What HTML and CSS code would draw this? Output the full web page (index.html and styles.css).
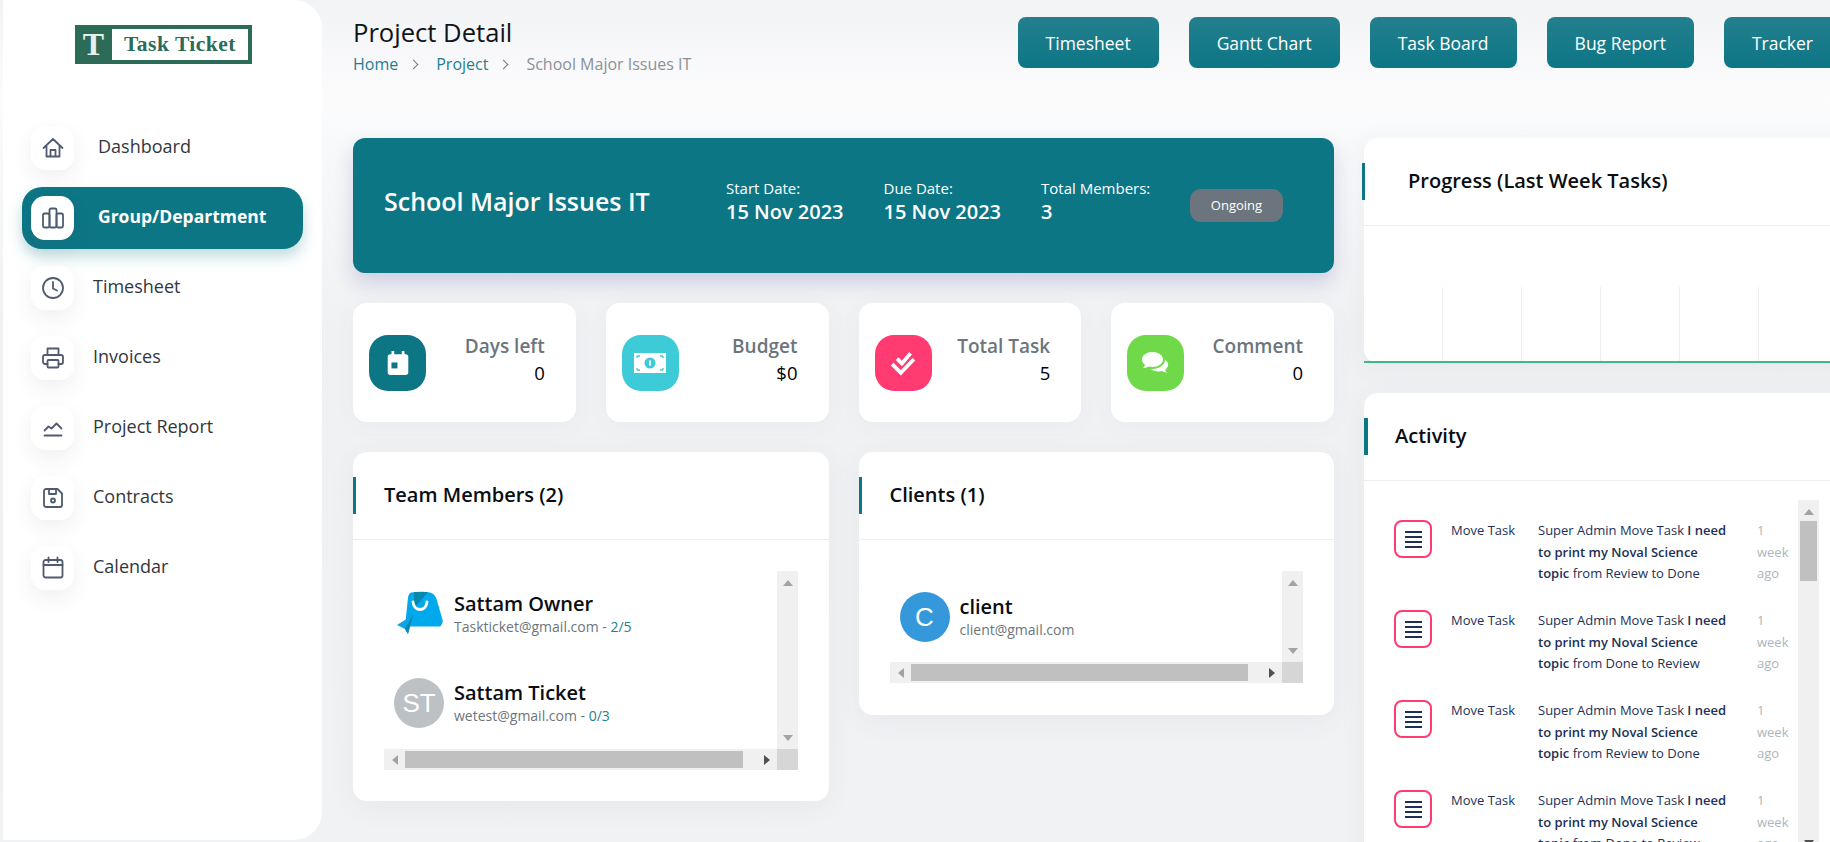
FILE: index.html
```html
<!DOCTYPE html>
<html lang="en">
<head>
    <meta charset="UTF-8">
    <meta name="viewport" content="width=device-width, initial-scale=1.0">
    <title>Project Detail</title>
    <link rel="stylesheet" href="styles.css">
</head>
<body>

<aside class="sidebar">
    <div class="logo">
        <span class="logo-t">T</span>
        <span class="logo-name">Task Ticket</span>
    </div>
    <nav class="menu">
        <a class="menu-row menu-row-wide">
            <span class="menu-icon"><svg viewBox="0 0 24 24"><path d="M2.500 12 12 3l9.500 9M5.500 10v10.500h13V10M9.500 20.500V14h5v6.500"/></svg></span>
            <span class="menu-label">Dashboard</span>
        </a>
        <a class="menu-row menu-row-wide active">
            <span class="menu-icon"><svg viewBox="0 0 24 24"><rect x="2" y="7.500" width="6.500" height="14" rx="1.500"/><rect x="8.500" y="2.500" width="7" height="19" rx="1.500"/><rect x="15.500" y="7.500" width="6.500" height="14" rx="1.500"/></svg></span>
            <span class="menu-label">Group/Department</span>
        </a>
        <a class="menu-row">
            <span class="menu-icon"><svg viewBox="0 0 24 24"><circle cx="12" cy="12" r="10"/><path d="M12 6v6.500l4 2"/></svg></span>
            <span class="menu-label">Timesheet</span>
        </a>
        <a class="menu-row">
            <span class="menu-icon"><svg viewBox="0 0 24 24"><path d="M6.500 9V2.500h11V9M6.500 18H4a2 2 0 0 1-2-2v-5a2 2 0 0 1 2-2h16a2 2 0 0 1 2 2v5a2 2 0 0 1-2 2h-2.500"/><rect x="6.500" y="14" width="11" height="7.500" rx="1"/></svg></span>
            <span class="menu-label">Invoices</span>
        </a>
        <a class="menu-row">
            <span class="menu-icon"><svg viewBox="0 0 24 24"><path d="M3.500 19.500h17M3.500 14.500l4-4 3 2 5-5 5 5"/></svg></span>
            <span class="menu-label">Project Report</span>
        </a>
        <a class="menu-row">
            <span class="menu-icon"><svg viewBox="0 0 24 24"><path d="M5 3h11.500L21 7.500V19a2 2 0 0 1-2 2H5a2 2 0 0 1-2-2V5a2 2 0 0 1 2-2zM8 3v5h7V3"/><circle cx="12" cy="14.500" r="2"/></svg></span>
            <span class="menu-label">Contracts</span>
        </a>
        <a class="menu-row">
            <span class="menu-icon"><svg viewBox="0 0 24 24"><rect x="2.500" y="4" width="19" height="17.500" rx="2"/><path d="M2.500 9h19M7.500 1.500v4.500M16.500 1.500v4.500"/></svg></span>
            <span class="menu-label">Calendar</span>
        </a>
    </nav>
</aside>

<div class="main">
    <header class="topbar">
        <div>
            <h1>Project Detail</h1>
            <div class="crumbs">
                <a>Home</a><span class="sep"></span><a>Project</a><span class="sep"></span><span>School Major Issues IT</span>
            </div>
        </div>
        <div class="top-buttons">
            <button>Timesheet</button>
            <button>Gantt Chart</button>
            <button>Task Board</button>
            <button>Bug Report</button>
            <button>Tracker</button>
        </div>
    </header>

    <div class="columns">
        <div class="left-col">
            <section class="hero">
                <h2>School Major Issues IT</h2>
                <div class="hero-item hero-start"><span>Start Date:</span><strong>15 Nov 2023</strong></div>
                <div class="hero-item hero-due"><span>Due Date:</span><strong>15 Nov 2023</strong></div>
                <div class="hero-item hero-members"><span>Total Members:</span><strong>3</strong></div>
                <span class="status">Ongoing</span>
            </section>

            <div class="stats">
                <div class="stat">
                    <span class="stat-icon teal"><svg viewBox="0 0 24 24"><path fill="#fff" d="M6 1h2.500v3H15.500V1H18v3h1a2.500 2.500 0 0 1 2.500 2.500v14A2.500 2.500 0 0 1 19 23H5a2.500 2.500 0 0 1-2.500-2.500v-14A2.500 2.500 0 0 1 5 4h1z"/><rect x="6" y="11.500" width="5.500" height="5.500" fill="#0d7685"/></svg></span>
                    <div class="stat-text"><span>Days left</span><b>0</b></div>
                </div>
                <div class="stat">
                    <span class="stat-icon cyan"><svg viewBox="0 0 32 24"><rect y="2" width="32" height="20" fill="#fff"/><circle cx="16" cy="12" r="5.500" fill="#3ecbd8"/><path d="M15 9.500h2v5h-2z" fill="#fff"/><path d="M3 5h3M3 5v2M29 5h-3M29 5v2M3 19h3M3 19v-2M29 19h-3M29 19v-2" stroke="#3ecbd8" stroke-width="1.300" fill="none"/></svg></span>
                    <div class="stat-text"><span>Budget</span><b>$0</b></div>
                </div>
                <div class="stat">
                    <span class="stat-icon pink"><svg viewBox="0 0 24 24"><path d="M2 13l8 8L22 8.500M6.500 8l4.500 4.500L19 3" stroke="#fff" stroke-width="3.400" fill="none"/></svg></span>
                    <div class="stat-text"><span>Total Task</span><b>5</b></div>
                </div>
                <div class="stat">
                    <span class="stat-icon green"><svg viewBox="0 0 30 24"><path fill="#fff" d="M11.500 1C5.700 1 1 4.300 1 8.500c0 2.100 1.200 4 3.100 5.400C3.800 15.200 3 16.300 1.500 17c2.600.2 4.800-.6 6.200-1.500 1.200.3 2.500.5 3.800.5 5.800 0 10.500-3.300 10.500-7.500S17.300 1 11.500 1z"/><path fill="#fff" stroke="#70d94a" stroke-width="1" d="M23.500 8.500c.3 4.800-5 9-12.500 9-.7 0-1.300 0-2-.1 1.800 2.200 5 3.600 8.500 3.600 1.300 0 2.500-.2 3.700-.5 1.400.9 3.400 1.700 6 1.500-1.500-.7-2.300-1.800-2.600-3.100 1.800-1.400 2.900-3.200 2.900-5.200 0-2.600-2-4.900-4-5.200z"/></svg></span>
                    <div class="stat-text"><span>Comment</span><b>0</b></div>
                </div>
            </div>

            <div class="panels">
                <section class="panel">
                    <h3 class="panel-title">Team Members (2)</h3>
                    <div class="scroll-box team-box">
                        <div class="scroll-body">
                            <div class="person">
                                <svg class="avatar" viewBox="0 0 50 50">
                                    <path fill="#00a8ec" d="M17 3.500c6-1 14-1 19 0 4 1 6 4 7 8l6 21c.5 3-1 5-4 5H11l3-29c.3-2 1.500-4.500 3-5z"/>
                                    <path fill="#0488ad" d="M20 3h14L20 19z"/>
                                    <path fill="none" stroke="#fff" stroke-width="2.800" stroke-linecap="round" d="M19 13c1 10 13 10 14 0"/>
                                    <path fill="#0fa3e3" d="M19 26 3 36l8 4 3 5z"/>
                                    <path fill="#0687b4" d="M19 26 11 40l3 5z"/>
                                </svg>
                                <div class="person-text"><div class="person-name">Sattam Owner</div><div class="person-mail">Taskticket@gmail.com - <em>2/5</em></div></div>
                            </div>
                            <div class="person">
                                <span class="avatar avatar-grey">ST</span>
                                <div class="person-text"><div class="person-name">Sattam Ticket</div><div class="person-mail">wetest@gmail.com - <em>0/3</em></div></div>
                            </div>
                        </div>
                        <div class="vbar"><i class="arr up"></i><i class="arr down"></i></div>
                        <div class="hbar"><i class="arr left"></i><span class="hthumb"></span><i class="arr right"></i></div>
                        <div class="corner"></div>
                    </div>
                </section>
                <section class="panel">
                    <h3 class="panel-title">Clients (1)</h3>
                    <div class="scroll-box client-box">
                        <div class="scroll-body">
                            <div class="person">
                                <span class="avatar avatar-blue">C</span>
                                <div class="person-text"><div class="person-name">client</div><div class="person-mail">client@gmail.com</div></div>
                            </div>
                        </div>
                        <div class="vbar"><i class="arr up"></i><i class="arr down"></i></div>
                        <div class="hbar"><i class="arr left"></i><span class="hthumb"></span><i class="arr right"></i></div>
                        <div class="corner"></div>
                    </div>
                </section>
            </div>
        </div>

        <div class="right-col">
            <section class="panel progress">
                <h3 class="panel-title">Progress (Last Week Tasks)</h3>
                <div class="chart">
                    <i></i><i></i><i></i><i></i><i></i><i></i><i></i><i></i><i></i>
                </div>
            </section>
            <section class="panel activity">
                <h3 class="panel-title">Activity</h3>
                <div class="activity-box">
                    <div class="activity-list">
                        <div class="act">
                            <span class="act-icon"><i></i></span>
                            <span class="act-type">Move Task</span>
                            <p class="act-text">Super Admin Move Task <b>I need to print my Noval Science topic</b> from Review to Done</p>
                            <span class="act-time">1 week ago</span>
                        </div>
                        <div class="act">
                            <span class="act-icon"><i></i></span>
                            <span class="act-type">Move Task</span>
                            <p class="act-text">Super Admin Move Task <b>I need to print my Noval Science topic</b> from Done to Review</p>
                            <span class="act-time">1 week ago</span>
                        </div>
                        <div class="act">
                            <span class="act-icon"><i></i></span>
                            <span class="act-type">Move Task</span>
                            <p class="act-text">Super Admin Move Task <b>I need to print my Noval Science topic</b> from Review to Done</p>
                            <span class="act-time">1 week ago</span>
                        </div>
                        <div class="act">
                            <span class="act-icon"><i></i></span>
                            <span class="act-type">Move Task</span>
                            <p class="act-text">Super Admin Move Task <b>I need to print my Noval Science topic</b> from Done to Review</p>
                            <span class="act-time">1 week ago</span>
                        </div>
                    </div>
                    <div class="act-bar"><i class="arr up"></i><span class="vthumb"></span><i class="arr down dark"></i></div>
                </div>
            </section>
        </div>
    </div>
</div>

</body>
</html>
```

FILE: styles.css
```css
* {
    box-sizing: border-box;
}
html, body {
    height: 842px;
    overflow: hidden;
}
body {
    margin: 0;
    display: flex;
    font-family: "Open Sans", sans-serif;
    color: #000;
    background: linear-gradient(180deg, #f2f3f5 0, #fcfcfd 100px, #f8f9fa 140px, #eff1f3 330px, #f1f2f4 100%);
}

/* sidebar */
.sidebar {
    flex: none;
    width: 319px;
    height: 840px;
    margin-left: 3px;
    background: #fff;
    border-radius: 0 28px 28px 0;
}
.logo {
    display: flex;
    align-items: stretch;
    width: 177px;
    height: 39px;
    margin: 25px 0 0 72px;
    padding: 4px 4px 4px 0;
    background: #2b6b58;
}
.logo-t {
    width: 37px;
    text-align: center;
    color: #e8f0ec;
    font: bold 32px/30px "Liberation Serif", serif;
}
.logo-name {
    flex: 1;
    background: #fff;
    color: #2b6b58;
    text-align: center;
    font: bold 21.500px/31px "Liberation Serif", serif;
    letter-spacing: 0.5px;
    white-space: nowrap;
}
.menu {
    display: flex;
    flex-direction: column;
    margin-top: 62px;
}
.menu-row {
    display: flex;
    align-items: center;
    gap: 19px;
    height: 44px;
    margin-bottom: 26px;
    padding-left: 28px;
    font-size: 18px;
    color: #33373d;
}
.menu-row-wide {
    gap: 24px;
}
.menu-label {
    margin-bottom: 5px;
}
.menu-row.active {
    width: 281px;
    height: 62px;
    margin: -9px 0 17px 19px;
    padding-left: 9px;
    background: #0d7685;
    color: #fff;
    font-size: 17.500px;
    font-weight: 700;
    border-radius: 20px;
    box-shadow: 0 8px 14px rgba(13, 118, 133, 0.25);
}
.menu-icon {
    display: flex;
    flex: none;
    align-items: center;
    justify-content: center;
    width: 43px;
    height: 44px;
    background: #fff;
    border-radius: 14px;
    box-shadow: 0 8px 20px rgba(60, 70, 90, 0.08);
}
.menu-icon svg {
    width: 24px;
    height: 24px;
    fill: none;
    stroke: #4f5b70;
    stroke-width: 1.800;
    stroke-linejoin: round;
    stroke-linecap: round;
}

/* header */
.main {
    flex: none;
    width: 1508px;
    padding-left: 31px;
}
.topbar {
    display: flex;
    justify-content: space-between;
    height: 138px;
}
h1 {
    margin: 16px 0 0;
    font-size: 25.600px;
    font-weight: 400;
    line-height: 34px;
    color: #10141a;
}
.crumbs {
    display: flex;
    align-items: center;
    margin-top: 3px;
    font-size: 16px;
    line-height: 22px;
    color: #8a9099;
}
.crumbs a {
    color: #1f7f90;
}
.sep {
    width: 7px;
    height: 7px;
    margin: 0 19px 0 12px;
    border-top: 1.500px solid #777;
    border-right: 1.500px solid #777;
    transform: rotate(45deg);
}
.top-buttons {
    display: flex;
    flex: none;
    gap: 30px;
    padding-top: 17px;
    margin-right: -11px;
}
.top-buttons button {
    height: 51px;
    padding: 0 28px;
    border: 0;
    border-radius: 8px;
    background: linear-gradient(180deg, #237f8e, #0d7685);
    color: #fff;
    font: 500 17.500px "Open Sans", sans-serif;
    white-space: nowrap;
}

/* layout */
.columns {
    display: flex;
    gap: 30px;
}
.left-col {
    flex: none;
    width: 981px;
}
.right-col {
    flex: none;
    width: 540px;
}

/* hero */
.hero {
    display: flex;
    align-items: center;
    height: 135px;
    padding-left: 31px;
    background: #0d7685;
    border-radius: 12px;
    color: #fff;
    box-shadow: 0 10px 20px rgba(70, 60, 150, 0.2);
}
.hero h2 {
    width: 342px;
    margin: 0 0 10px;
    font-size: 25px;
    font-weight: 600;
}
.hero-item {
    display: flex;
    flex-direction: column;
    margin-bottom: 8px;
}
.hero-item span {
    font-size: 15px;
    line-height: 20px;
}
.hero-item strong {
    font-size: 20px;
    font-weight: 600;
    line-height: 27px;
}
.hero-start, .hero-due {
    width: 157.500px;
}
.hero-members {
    width: 149px;
}
.status {
    width: 93px;
    height: 33px;
    background: #6c757d;
    border-radius: 11px;
    text-align: center;
    font-size: 13px;
    line-height: 33px;
    font-weight: 500;
}

/* stat cards */
.stats {
    display: grid;
    grid-template-columns: repeat(4, 1fr);
    gap: 30px;
    margin-top: 30px;
}
.stat {
    display: flex;
    align-items: center;
    justify-content: space-between;
    height: 119px;
    padding: 0 31px 0 16px;
    background: #fff;
    border-radius: 14px;
    box-shadow: 0 4px 24px rgba(100, 110, 130, 0.04);
}
.stat-icon {
    display: flex;
    align-items: center;
    justify-content: center;
    width: 57px;
    height: 56px;
    border-radius: 19px;
}
.stat-icon svg {
    width: 26px;
    height: 26px;
}
.cyan svg {
    width: 32px;
}
.green svg {
    width: 30px;
}
.teal {
    background: #0d7685;
}
.cyan {
    background: #3ecbd8;
}
.pink {
    background: #ff3b72;
}
.green {
    background: #70d94a;
}
.stat-text {
    display: flex;
    flex-direction: column;
    align-items: flex-end;
    margin-bottom: 7px;
}
.stat-text span {
    font-size: 19px;
    line-height: 26px;
    font-weight: 600;
    color: #6c757d;
}
.stat-text b {
    font-size: 18.500px;
    line-height: 27px;
    font-weight: 500;
}

/* panels */
.panels {
    display: grid;
    grid-template-columns: repeat(2, 1fr);
    gap: 30px;
    align-items: start;
    margin-top: 30px;
}
.panel {
    position: relative;
    background: #fff;
    border-radius: 14px;
    box-shadow: 0 6px 28px rgba(80, 90, 110, 0.06);
}
.panel-title {
    position: relative;
    height: 88px;
    margin: 0;
    padding-left: 31px;
    border-bottom: 1px solid #eee;
    font-size: 20px;
    font-weight: 600;
    line-height: 85px;
    color: #0a0d12;
}
.panel-title::before {
    content: "";
    position: absolute;
    left: 0;
    top: 25px;
    width: 3px;
    height: 37px;
    background: #0d7685;
}
.scroll-box {
    display: grid;
    grid-template-columns: minmax(0, 1fr) 21px;
    grid-template-rows: minmax(0, 1fr) 21px;
    margin: 31px 31px 0;
    overflow: hidden;
}
.team-box {
    height: 199px;
    margin-bottom: 31px;
}
.client-box {
    height: 112px;
    margin-bottom: 32px;
}
.scroll-body {
    min-width: 0;
    overflow: hidden;
    padding: 18px 0 0 10px;
}
.client-box .scroll-body {
    padding-top: 21px;
}
.person {
    display: flex;
    align-items: center;
    gap: 10px;
    height: 50px;
    margin-bottom: 39px;
    white-space: nowrap;
}
.person-text {
    padding-bottom: 1px;
}
.avatar {
    display: flex;
    flex: none;
    align-items: center;
    justify-content: center;
    width: 50px;
    height: 50px;
    border-radius: 50%;
    color: #fff;
    font: 26px "Liberation Sans", sans-serif;
}
.avatar-grey {
    background: #bcc1c6;
}
.avatar-blue {
    background: #3498db;
}
.person-name {
    font-size: 20px;
    font-weight: 600;
    line-height: 26px;
    color: #0a0d12;
}
.person-mail {
    font-size: 14px;
    line-height: 20px;
    color: #6c757d;
}
.person-mail em {
    font-style: normal;
    color: #1f7f90;
}
.vbar, .hbar {
    position: relative;
    background: #f0f0f0;
}
.corner {
    background: #d6d6d6;
}
.hthumb {
    position: absolute;
    left: 21px;
    right: 34px;
    top: 2px;
    bottom: 2px;
    background: #c0c0c0;
}
.arr {
    position: absolute;
    width: 0;
    height: 0;
    border: 5px solid transparent;
}
.arr.up {
    top: 9px;
    left: 6px;
    border-top: 0;
    border-bottom: 6px solid #a3a3a3;
}
.arr.down {
    bottom: 8px;
    left: 6px;
    border-bottom: 0;
    border-top: 6px solid #a3a3a3;
}
.arr.down.dark {
    border-top-color: #505050;
}
.arr.left {
    left: 8px;
    top: 6px;
    border-left: 0;
    border-right: 6px solid #a3a3a3;
}
.arr.right {
    right: 7px;
    top: 6px;
    border-right: 0;
    border-left: 6px solid #505050;
}

/* right column */
.progress {
    height: 225px;
    margin-bottom: 30px;
}
.progress .panel-title {
    padding-left: 44px;
}
.progress .panel-title::before {
    left: -2px;
}
.activity .panel-title::before {
    width: 4px;
}
.chart {
    display: flex;
    height: 137px;
    padding-top: 61px;
    border-bottom: 2px solid #3fb886;
}
.chart i {
    flex: none;
    width: 79px;
    border-right: 1px solid #eee;
}
.activity-box {
    display: flex;
    align-items: flex-start;
    height: 400px;
    overflow: hidden;
    padding: 19px 0 0 30px;
}
.activity-list {
    flex: none;
    width: 404px;
}
.act {
    display: flex;
    align-items: flex-start;
    height: 90px;
    font-size: 13px;
    line-height: 21.500px;
    color: #1e3056;
}
.act-icon {
    display: flex;
    flex: none;
    align-items: center;
    justify-content: center;
    width: 38px;
    height: 38px;
    margin-top: 20px;
    border: 2px solid #ff3b72;
    border-radius: 8px;
}
.act-icon i {
    width: 17px;
    height: 17px;
    background: repeating-linear-gradient(180deg, #1e2f58 0, #1e2f58 2px, #fff 2px, #fff 5px);
}
.act-type {
    flex: none;
    width: 87px;
    margin: 20px 0 0 19px;
    white-space: nowrap;
}
.act-text {
    flex: none;
    width: 219px;
    margin: 20px 0 0;
    padding-right: 27px;
}
.act-text b {
    font-weight: 600;
}
.act-time {
    flex: none;
    width: 38px;
    margin-top: 20px;
    color: #adb5bd;
}
.act-bar {
    position: relative;
    flex: none;
    width: 21px;
    height: 354px;
    background: #f0f0f0;
}
.vthumb {
    position: absolute;
    left: 2px;
    right: 2px;
    top: 21px;
    height: 60px;
    background: #c0c0c0;
}
```
